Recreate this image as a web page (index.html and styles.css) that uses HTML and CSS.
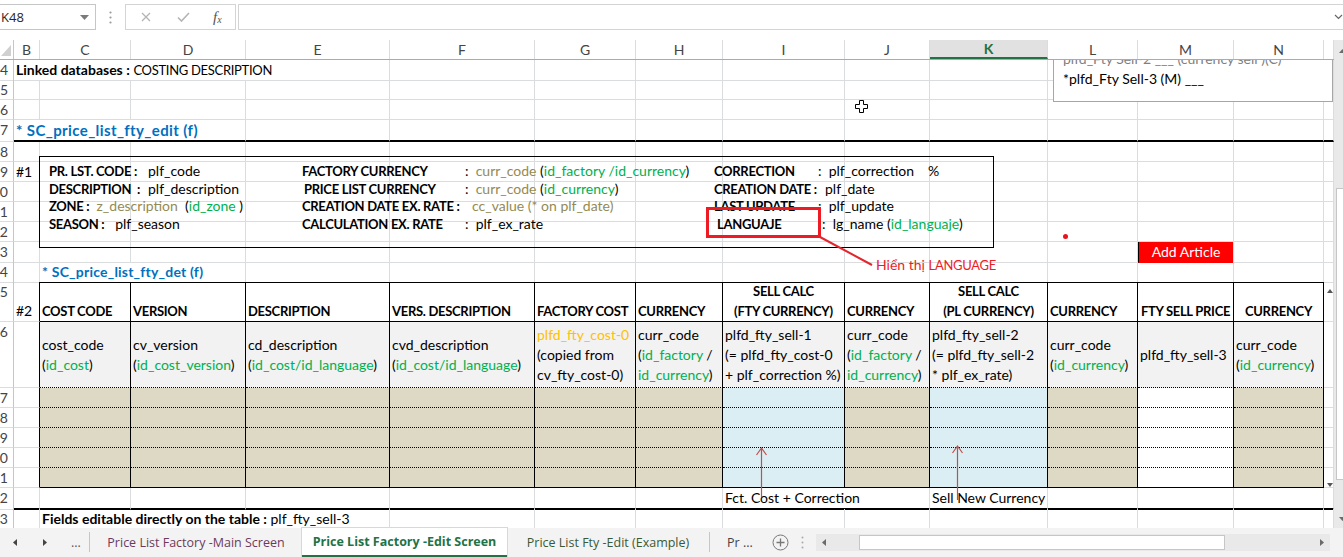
FILE: index.html
```html
<!DOCTYPE html>
<html>
<head>
<meta charset="utf-8">
<title>Price List Factory - Edit Screen</title>
<link rel="stylesheet" href="styles.css">
</head>
<body>
<div class="app">
  <div class="fbar">
    <div class="namebox"><span>K48</span><svg class="nb-arrow" width="9" height="5" viewBox="0 0 9 5"><path d="M0 0h9L4.5 5z" fill="#7a7a7a"/></svg></div>
    <div class="fb-dots"><svg width="3" height="13" viewBox="0 0 3 13"><circle cx="1.5" cy="1.5" r="1.1" fill="#9a9a9a"/><circle cx="1.5" cy="6.5" r="1.1" fill="#9a9a9a"/><circle cx="1.5" cy="11.5" r="1.1" fill="#9a9a9a"/></svg></div>
    <div class="fb-btns">
      <svg class="ico-x" width="10" height="10" viewBox="0 0 10 10"><path d="M1 1l8 8M9 1l-8 8" stroke="#b4b4b4" stroke-width="1.3"/></svg>
      <svg class="ico-ok" width="13" height="10" viewBox="0 0 13 10"><path d="M1 5.5l3.5 3.5L12 1" stroke="#b4b4b4" stroke-width="1.6" fill="none"/></svg>
      <span class="fx">f<sub>x</sub></span>
    </div>
    <div class="fb-input"><svg class="chev" width="9" height="6" viewBox="0 0 9 6"><path d="M1 1l3.5 3.5L8 1" stroke="#666" stroke-width="1.2" fill="none"/></svg></div>
  </div>

  <div class="main">
    <div class="grid">
      <div class="colheads">
        <div class="corner"><svg width="10" height="11" viewBox="0 0 10 11"><path d="M10 0v11H0z" fill="#d0d0d0"/></svg></div>
        <div>B</div><div>C</div><div>D</div><div>E</div><div>F</div><div>G</div><div>H</div><div>I</div><div>J</div><div class="sel">K</div><div>L</div><div>M</div><div>N</div><div></div>
      </div>

      <div class="sheet">
        <!-- row 4 -->
        <div class="row h20"><div class="rh">4</div><div class="s4"><b>Linked databases :</b> <span class="uc">COSTING DESCRIPTION</span></div><i></i><i></i><i></i><i></i><i></i><i></i><i></i><i></i><i></i><i></i></div>
        <!-- row 5 -->
        <div class="row h20"><div class="rh">5</div><i></i><i></i><i></i><i></i><i></i><i></i><i></i><i></i><i></i><i></i><i></i><i></i><i></i><i></i></div>
        <!-- row 6 -->
        <div class="row h20"><div class="rh">6</div><i></i><i></i><i></i><i></i><i></i><i></i><i></i><i></i><i></i><i></i><i></i><i></i><i></i><i></i></div>
        <!-- row 7 -->
        <div class="row h22 thick"><div class="rh">7</div><div class="s3 title">* SC_price_list_fty_edit (f)</div><i></i><i></i><i></i><i></i><i></i><i></i><i></i><i></i><i></i><i></i><i></i></div>
        <!-- row 8 -->
        <div class="row h20"><div class="rh">8</div><i></i><i></i><i></i><i></i><i></i><i></i><i></i><i></i><i></i><i></i><i></i><i></i><i></i><i></i></div>
        <!-- row 9 -->
        <div class="row h20"><div class="rh">9</div><div>#1</div><i></i><i></i><i></i><i></i><i></i><i></i><i></i><i></i><i></i><i></i><i></i><i></i><i></i></div>
        <!-- row 10 -->
        <div class="row h20"><div class="rh">10</div><i></i><i></i><i></i><i></i><i></i><i></i><i></i><i></i><i></i><i></i><i></i><i></i><i></i><i></i></div>
        <!-- row 11 -->
        <div class="row h20"><div class="rh">11</div><i></i><i></i><i></i><i></i><i></i><i></i><i></i><i></i><i></i><i></i><i></i><i></i><i></i><i></i></div>
        <!-- row 12 -->
        <div class="row h20"><div class="rh">12</div><i></i><i></i><i></i><i></i><i></i><i></i><i></i><i></i><i></i><i></i><i></i><i></i><i></i><i></i></div>
        <!-- row 13 -->
        <div class="row h20"><div class="rh">13</div><i></i><i></i><i></i><i></i><i></i><i></i><i></i><i></i><i></i><i></i><i></i><div class="add">Add Article</div><i></i><i></i></div>
        <!-- row 14 -->
        <div class="row h20"><div class="rh">14</div><i></i><div class="s2 title2 tt">* SC_price_list_fty_det (f)</div><i class="tt"></i><i class="tt"></i><i class="tt"></i><i class="tt"></i><i class="tt"></i><i class="tt"></i><i class="tt"></i><i class="tt"></i><i class="tt"></i><i class="tt"></i><i></i></div>
        <!-- row 15 header -->
        <div class="row h40"><div class="rh">15</div><div class="tl hb">#2</div>
          <div class="th">COST CODE</div>
          <div class="th">VERSION</div>
          <div class="th">DESCRIPTION</div>
          <div class="th">VERS. DESCRIPTION</div>
          <div class="th">FACTORY COST</div>
          <div class="th">CURRENCY</div>
          <div class="th ctr">SELL CALC<br>(FTY CURRENCY)</div>
          <div class="th">CURRENCY</div>
          <div class="th ctr">SELL CALC<br>(PL CURRENCY)</div>
          <div class="th">CURRENCY</div>
          <div class="th ctr">FTY SELL PRICE</div>
          <div class="th ctr">CURRENCY</div>
          <i></i>
        </div>
        <!-- row 16 data -->
        <div class="row h66"><div class="rh">16</div><div class="tl"></div>
          <div class="td"><div>cost_code<br>(<span class="g">id_cost</span>)</div></div>
          <div class="td"><div>cv_version<br>(<span class="g">id_cost_version</span>)</div></div>
          <div class="td"><div>cd_description<br>(<span class="g">id_cost/id_language</span>)</div></div>
          <div class="td"><div>cvd_description<br>(<span class="g">id_cost/id_language</span>)</div></div>
          <div class="td"><div><span class="or">plfd_fty_cost-0</span><br>(copied from<br>cv_fty_cost-0)</div></div>
          <div class="td"><div>curr_code<br>(<span class="g">id_factory</span> /<br><span class="g">id_currency</span>)</div></div>
          <div class="td"><div>plfd_fty_sell-1<br>(= plfd_fty_cost-0<br>+ plf_correction %)</div></div>
          <div class="td"><div>curr_code<br>(<span class="g">id_factory</span> /<br><span class="g">id_currency</span>)</div></div>
          <div class="td"><div>plfd_fty_sell-2<br>(= plfd_fty_sell-2<br>* plf_ex_rate)</div></div>
          <div class="td"><div>curr_code<br>(<span class="g">id_currency</span>)</div></div>
          <div class="td"><div>plfd_fty_sell-3</div></div>
          <div class="td"><div>curr_code<br>(<span class="g">id_currency</span>)</div></div>
          <i></i>
        </div>
        <!-- rows 17-21 -->
        <div class="row h20"><div class="rh">17</div><div class="tl"></div><i class="f tan"></i><i class="f tan"></i><i class="f tan"></i><i class="f tan"></i><i class="f tan"></i><i class="f tan"></i><i class="f blu"></i><i class="f tan"></i><i class="f blu"></i><i class="f tan"></i><i class="f wht"></i><i class="f tan"></i><i></i></div>
        <div class="row h20"><div class="rh">18</div><div class="tl"></div><i class="f tan"></i><i class="f tan"></i><i class="f tan"></i><i class="f tan"></i><i class="f tan"></i><i class="f tan"></i><i class="f blu"></i><i class="f tan"></i><i class="f blu"></i><i class="f tan"></i><i class="f wht"></i><i class="f tan"></i><i></i></div>
        <div class="row h20"><div class="rh">19</div><div class="tl"></div><i class="f tan"></i><i class="f tan"></i><i class="f tan"></i><i class="f tan"></i><i class="f tan"></i><i class="f tan"></i><i class="f blu"></i><i class="f tan"></i><i class="f blu"></i><i class="f tan"></i><i class="f wht"></i><i class="f tan"></i><i></i></div>
        <div class="row h20"><div class="rh">20</div><div class="tl"></div><i class="f tan"></i><i class="f tan"></i><i class="f tan"></i><i class="f tan"></i><i class="f tan"></i><i class="f tan"></i><i class="f blu"></i><i class="f tan"></i><i class="f blu"></i><i class="f tan"></i><i class="f wht"></i><i class="f tan"></i><i></i></div>
        <div class="row h20 last"><div class="rh">21</div><div class="tl"></div><i class="f tan"></i><i class="f tan"></i><i class="f tan"></i><i class="f tan"></i><i class="f tan"></i><i class="f tan"></i><i class="f blu"></i><i class="f tan"></i><i class="f blu"></i><i class="f tan"></i><i class="f wht"></i><i class="f tan"></i><i></i></div>
        <!-- row 22 -->
        <div class="row h21 thick"><div class="rh">22</div><i></i><i></i><i></i><i></i><i></i><i></i><i></i><div class="s2 note">Fct. Cost + Correction</div><div class="note">Sell New Currency</div><i></i><i></i><i></i><i></i></div>
        <!-- row 23 -->
        <div class="row h20"><div class="rh">23</div><i></i><div class="s3"><b>Fields editable directly on the table :</b> plf_fty_sell-3</div><i></i><i></i><i></i><i></i><i></i><i></i><i></i><i></i><i></i><i></i></div>

        <!-- overlay: text box #1 -->
        <div class="box1">
          <div class="blk blk1">
            <div class="ln"><b class="w1">PR. LST. CODE :</b>plf_code</div>
            <div class="ln"><b class="w1">DESCRIPTION&nbsp; :</b>plf_description</div>
            <div class="ln"><b>ZONE :</b>&nbsp; <span class="ol">z_description</span>&nbsp; (<span class="g">id_zone</span> )</div>
            <div class="ln"><b>SEASON :</b>&nbsp;&nbsp; plf_season</div>
          </div>
          <div class="blk blk2">
            <div class="ln"><b class="w2">FACTORY CURRENCY</b>:&nbsp; <span class="ol">curr_code</span> (<span class="g">id_factory /id_currency</span>)</div>
            <div class="ln"><b class="w2 in2">PRICE LIST CURRENCY</b>:&nbsp; <span class="ol">curr_code</span> (<span class="g">id_currency</span>)</div>
            <div class="ln"><b class="w2b">CREATION DATE EX. RATE :</b><span class="ol">cc_value (* on plf_date)</span></div>
            <div class="ln"><b class="w2">CALCULATION EX. RATE</b>:&nbsp; plf_ex_rate</div>
          </div>
          <div class="blk blk3">
            <div class="ln"><b class="w3">CORRECTION</b>:&nbsp; plf_correction<span class="pct">%</span></div>
            <div class="ln"><b class="w3b">CREATION DATE :</b>plf_date</div>
            <div class="ln"><b class="w3">LAST UPDATE</b>:&nbsp; plf_update</div>
            <div class="ln"><b class="w3 in3">LANGUAJE</b>:&nbsp; lg_name (<span class="g">id_languaje</span>)</div>
          </div>
        </div>

        <div class="redbox"></div>
        <div class="note-red">Hiển thị <span class="uc">LANGUAGE</span></div>
        <div class="reddot"></div>

        <!-- overlay: floating comment box top right -->
        <div class="box2">
          <div class="b2l1">plfd_Fty Sell-2 ___ (currency sell )(C)</div>
          <div>*plfd_Fty Sell-3 (M) ___</div>
        </div>

        <svg class="cursor" width="13" height="13" viewBox="0 0 13 13"><path d="M4.5 0.5h4v4h4v4h-4v4h-4v-4h-4v-4h4z" fill="#fff" stroke="#000" stroke-width="1"/></svg>

        <svg class="lines" width="1334" height="468" viewBox="0 0 1334 468">
          <path d="M820 177L872 205" stroke="#e3262d" stroke-width="2"/>
          <path d="M761.5 437V388M756.5 395l5-7 5 7" stroke="#c0504d" stroke-width="1.2" fill="none"/>
          <path d="M957.5 440V386M952.5 393l5-7 5 7" stroke="#c0504d" stroke-width="1.2" fill="none"/>
          <path d="M1327 233h6l-3-4z" fill="#555"/>
          <path d="M1327 423h6l-3 4z" fill="#555"/>
        </svg>
      </div>
    </div>

    <div class="vscroll">
      <div class="vs-up"><svg width="7" height="4" viewBox="0 0 7 4"><path d="M0 4h7L3.5 0z" fill="#6a6a6a"/></svg></div>
      <div class="vs-track"><div class="vs-thumb"></div></div>
      <div class="vs-down"><svg width="7" height="4" viewBox="0 0 7 4"><path d="M0 0h7L3.5 4z" fill="#6a6a6a"/></svg></div>
    </div>
  </div>

  <div class="tabbar">
    <div class="tnav">
      <svg class="tn1" width="4" height="7" viewBox="0 0 4 7"><path d="M4 0v7L0 3.5z" fill="#444"/></svg>
      <svg class="tn2" width="4" height="7" viewBox="0 0 4 7"><path d="M0 0v7L4 3.5z" fill="#444"/></svg>
      <span class="tdots">...</span>
    </div>
    <div class="tab t1">Price List Factory -Main Screen</div>
    <div class="tab active">Price List Factory -Edit Screen</div>
    <div class="tab t3">Price List Fty -Edit (Example)</div>
    <div class="tmore">Pr ...</div>
    <svg class="tadd" width="17" height="17" viewBox="0 0 17 17"><circle cx="8.5" cy="8.5" r="7.5" fill="none" stroke="#777" stroke-width="1"/><path d="M8.5 4.5v8M4.5 8.5h8" stroke="#777" stroke-width="1.3"/></svg>
    <svg class="tkebab" width="3" height="13" viewBox="0 0 3 13"><circle cx="1.5" cy="1.5" r="1" fill="#aaa"/><circle cx="1.5" cy="6.5" r="1" fill="#aaa"/><circle cx="1.5" cy="11.5" r="1" fill="#aaa"/></svg>
    <div class="hscroll">
      <div class="hs-btn"><svg width="4" height="7" viewBox="0 0 4 7"><path d="M4 0v7L0 3.5z" fill="#6a6a6a"/></svg></div>
      <div class="hs-track"><div class="hs-thumb"></div></div>
      <div class="hs-btn"><svg width="4" height="7" viewBox="0 0 4 7"><path d="M0 0v7L4 3.5z" fill="#6a6a6a"/></svg></div>
    </div>
  </div>
</div>
</body>
</html>
```

FILE: styles.css
```css
* { box-sizing: border-box; margin: 0; padding: 0; }
html, body { width: 1343px; height: 557px; overflow: hidden; background: #fff; }
body { font-family: "Lato", "Liberation Sans", sans-serif; font-size: 14px; color: #000; }

.app { width: 1343px; height: 557px; overflow: hidden; display: flex; flex-direction: column; }

/* ---------- formula bar ---------- */
.fbar { height: 40px; flex: none; display: flex; align-items: flex-start; padding-top: 4px; font-family: "Open Sans", "Liberation Sans", sans-serif; }
.namebox { width: 96px; height: 26px; border: 1px solid #c6c6c6; border-left: none; display: flex; align-items: center; justify-content: space-between; padding: 0 6px 0 1px; font-size: 13px; color: #262626; }
.fb-dots { width: 29px; height: 26px; display: flex; align-items: center; justify-content: center; }
.fb-btns { width: 111px; height: 26px; border: 1px solid #d4d4d4; display: flex; align-items: center; padding-left: 15px; }
.ico-x { margin-right: 26px; }
.ico-ok { margin-right: 23px; }
.fx { font-family: "Liberation Serif", serif; font-style: italic; font-size: 15px; color: #555; line-height: 1; }
.fx sub { font-size: 10px; vertical-align: -1px; }
.fb-input { flex: 1; height: 26px; margin-left: 2px; border: 1px solid #d4d4d4; border-right: none; display: flex; align-items: center; justify-content: flex-end; }

/* ---------- grid ---------- */
.main { height: 488px; flex: none; display: flex; }
.grid { width: 1334px; flex: none; display: flex; flex-direction: column; }

.colheads, .row { display: grid; grid-template-columns: 14px 26px 91px 115px 144px 145px 101px 87px 122px 85px 118px 90px 96px 90px 10px; }
.colheads { height: 20px; border-bottom: 1px solid #ababab; flex: none; }
.colheads > div { border-right: 1px solid #dadcdd; text-align: center; line-height: 19px; color: #444; font-size: 14px; overflow: hidden; }
.colheads > .corner { border-right-color: #c6c6c6; display: flex; align-items: flex-end; justify-content: flex-end; padding: 0 2px 3px 0; }
.colheads > .sel { background: #e1e1e1; color: #217346; font-weight: bold; border-bottom: 2px solid #217346; line-height: 18px; }

.sheet { position: relative; height: 468px; overflow: hidden; flex: none; }

.row > * { border-right: 1px solid #dadcdd; border-bottom: 1px solid #dadcdd; white-space: nowrap; line-height: 19px; padding-left: 2px; font-style: normal; min-width: 0; }
.h20 { height: 20px; }
.h21 { height: 21px; }
.h22 { height: 22px; }
.h40 { height: 40px; }
.h66 { height: 66px; }

.row > .rh { color: #444; display: flex; justify-content: flex-end; padding: 0 5px 0 0; overflow: hidden; border-right-color: #c6c6c6; font-size: 14px; }
.s2 { grid-column: span 2; }
.s3 { grid-column: span 3; }
.s4 { grid-column: span 4; }

.uc { font-size: 13px; letter-spacing: -0.3px; }

.thick > *:not(.rh) { border-bottom: 2px solid #000; }
.row > .title { color: #0070c0; font-weight: bold; font-size: 15px; letter-spacing: 0.4px; line-height: 20px; }
.row > .title2 { color: #0070c0; font-weight: bold; font-size: 14px; letter-spacing: 0.2px; line-height: 20px; }
.row > .tt { border-bottom-color: #000; }
.row > .tl { border-right-color: #000; }
.hb { display: flex; align-items: flex-end; }
.row > .hb { line-height: 20px; }

.row > .th { font-weight: bold; font-size: 13px; letter-spacing: -0.3px; display: flex; flex-direction: column; justify-content: flex-end; border-right-color: #000; border-bottom: 1px solid #000; line-height: 20px; overflow: hidden; }
.row > .ctr { align-items: center; text-align: center; padding-left: 0; }
.row > .td { background: #f2f2f2; display: flex; flex-direction: column; justify-content: center; border-right-color: #000; border-bottom: 1px dotted #000; line-height: 20px; overflow: hidden; }
.row > .f { border-right-color: #000; border-bottom: 1px dotted #000; }
.row.last > .f { border-bottom: 1px solid #000; }
.tan { background: #ddd9c4; }
.blu { background: #daeef3; }
.wht { background: #fff; }

.g { color: #00b050; }
.ol { color: #948a54; }
.or { color: #ffc000; }

.row > .add { background: #ff0000; color: #fff; text-align: center; padding-left: 0; border-left: 1px solid #000; border-bottom-color: #ff0000; line-height: 20px; }
.row > .note { line-height: 20px; }

/* text box #1 */
.box1 { position: absolute; left: 39px; top: 96px; width: 955px; height: 92px; border: 1px solid #000; padding: 5px 0 0 9px; display: flex; }
.blk { white-space: nowrap; }
.ln { height: 17.7px; line-height: 17.7px; overflow: visible; }
.blk b { font-size: 13px; letter-spacing: -0.3px; line-height: 1; }
.blk1 { width: 253px; }
.blk2 { width: 412px; }
.w1 { display: inline-block; width: 99px; }
.w2 { display: inline-block; width: 163px; }
.in2 { padding-left: 2px; }
.w2b { display: inline-block; width: 170px; }
.w3 { display: inline-block; width: 104px; }
.in3 { padding-left: 3px; width: 108px; }
.w3b { display: inline-block; width: 111px; }
.pct { margin-left: 14px; }

.redbox { position: absolute; left: 706px; top: 147px; width: 115px; height: 31px; border: 3px solid #ed1c24; }
.note-red { position: absolute; left: 876px; top: 195px; line-height: 20px; color: #ee1c25; white-space: nowrap; }
.reddot { position: absolute; left: 1063px; top: 174px; width: 5px; height: 5px; border-radius: 50%; background: #e8141b; }

.box2 { position: absolute; left: 1053px; top: -22px; width: 280px; height: 64px; background: #fff; border: 1px solid #a6a6a6; padding: 10px 0 0 9px; line-height: 20px; white-space: nowrap; }
.b2l1 { color: #7f7f7f; }

.cursor { position: absolute; left: 855px; top: 40px; }
.lines { position: absolute; left: 0; top: 0; pointer-events: none; }

/* vertical scrollbar */
.vscroll { width: 17px; flex: none; background: #e9e9e9; display: flex; flex-direction: column; }
.vs-up, .vs-down { height: 17px; display: flex; align-items: center; justify-content: center; flex: none; }
.vs-up { margin-top: 2px; }
.vs-track { flex: 1; position: relative; }
.vs-thumb { position: absolute; left: 2px; right: 2px; top: 129px; height: 292px; background: #fff; border: 1px solid #c6c6c6; }
.vs-down { margin-bottom: 1px; }

/* ---------- tab bar ---------- */
.tabbar { height: 29px; flex: none; background: #f3f3f3; display: flex; align-items: stretch; font-family: "Open Sans", "Liberation Sans", sans-serif; font-size: 12.5px; color: #444; }
.tnav { width: 90px; display: flex; align-items: center; border-right: 1px solid #c6c6c6; margin: 4px 0 5px; }
.tn1 { margin-left: 13px; }
.tn2 { margin-left: 26px; }
.tdots { margin-left: 24px; color: #555; }
.tab { display: flex; align-items: center; justify-content: center; white-space: nowrap; }
.t1 { width: 212px; color: #6b3a5e; }
.active { width: 205px; background: #fff; color: #217346; font-weight: bold; border-bottom: 2px solid #217346; box-shadow: 0 0 0 1px #d8d8d8; }
.t3 { width: 203px; color: #3a5a36; border-right: 1px solid #c6c6c6; margin: 4px 0 5px; }
.tmore { width: 52px; display: flex; align-items: center; padding-left: 17px; white-space: nowrap; }
.tadd { align-self: center; margin-left: 10px; }
.tkebab { align-self: center; margin-left: 12px; }
.hscroll { margin-left: 12px; flex: 1; display: flex; align-items: center; padding: 6px 13px 6px 0; }
.hs-btn { width: 16px; height: 17px; display: flex; align-items: center; justify-content: center; background: #e9e9e9; }
.hs-track { flex: 1; height: 17px; background: #e9e9e9; position: relative; }
.hs-thumb { position: absolute; left: 27px; width: 366px; top: 1px; bottom: 1px; background: #fff; border: 1px solid #c6c6c6; }
```
